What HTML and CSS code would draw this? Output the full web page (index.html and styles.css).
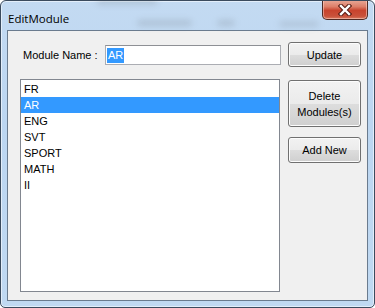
FILE: index.html
```html
<!DOCTYPE html>
<html lang="en">
<head>
    <meta charset="UTF-8">
    <title>EditModule</title>
    <link rel="stylesheet" href="styles.css">
</head>
<body>
    <div class="window">
        <div class="titlebar">
            <span class="blur blur-a"></span>
            <span class="blur blur-b"></span>
            <span class="blur blur-c"></span>
            <span class="blur blur-d"></span>
            <span class="title">EditModule</span>
            <button class="close" aria-label="Close">
                <svg width="14" height="12" viewBox="0 0 14 12">
                    <path d="M3 2 L11 10 M11 2 L3 10" stroke="#5a1d14" stroke-width="4.5" stroke-linecap="square"/>
                    <path d="M3 2 L11 10 M11 2 L3 10" stroke="#ffffff" stroke-width="2.4" stroke-linecap="square"/>
                </svg>
            </button>
        </div>

        <div class="client">
            <div class="left-col">
                <div class="name-row">
                    <label class="name-label">Module Name :</label>
                    <div class="textbox"><span class="sel">AR</span></div>
                </div>
                <ul class="listbox">
                    <li>FR</li>
                    <li class="selected">AR</li>
                    <li>ENG</li>
                    <li>SVT</li>
                    <li>SPORT</li>
                    <li>MATH</li>
                    <li>II</li>
                </ul>
            </div>
            <div class="right-col">
                <button class="btn btn-update">Update</button>
                <button class="btn btn-delete">Delete<br>Modules(s)</button>
                <button class="btn btn-add">Add New</button>
            </div>
        </div>
    </div>
</body>
</html>
```

FILE: styles.css
```css
body {
    margin: 0;
    background: #ffffff;
    font-family: "Liberation Sans", Arial, sans-serif;
    font-size: 11px;
}
.window {
    width: 375px;
    height: 308px;
    box-sizing: border-box;
    border: 1px solid #3b4b5e;
    border-radius: 6px 6px 5px 5px;
    padding: 0 6px 6px 6px;
    background: linear-gradient(to bottom, #c3daf2 0%, #bcd6f1 40%, #c0d9f2 100%);
    box-shadow: inset 0 0 0 1px #e3eefa;
    display: flex;
    flex-direction: column;
    overflow: hidden;
}
.titlebar {
    position: relative;
    height: 29px;
    display: flex;
    justify-content: space-between;
    align-items: flex-start;
}
.blur {
    position: absolute;
    background: #7f8a96;
    filter: blur(3px);
    opacity: 0.55;
    border-radius: 3px;
}
.blur-a { left: 90px; top: -2px; width: 60px; height: 5px; opacity: 0.35; }
.blur-b { left: 130px; top: 19px; width: 55px; height: 6px; opacity: 0.3; }
.blur-c { left: 210px; top: 19px; width: 18px; height: 6px; opacity: 0.3; }
.blur-d { left: 272px; top: 20px; width: 40px; height: 6px; opacity: 0.25; }
.title {
    position: relative;
    margin: 10px 0 0 1px;
    font-family: "Open Sans", "Noto Sans", sans-serif;
    font-size: 11.5px;
    color: #000000;
}
.close {
    position: relative;
    width: 46px;
    height: 20px;
    margin-top: -1px;
    padding: 0;
    border: 1px solid #4e2a24;
    border-top: none;
    border-radius: 0 0 5px 5px;
    background: linear-gradient(to bottom, #e9a998 0%, #dd7f69 35%, #c8432d 55%, #c9513a 85%, #d77a5f 100%);
    box-shadow: inset 0 0 0 1px rgba(255, 220, 210, 0.5);
    display: flex;
    align-items: center;
    justify-content: center;
}
.client {
    flex: 1;
    border: 1px solid #6a7b8e;
    background: #f0f0f0;
    display: flex;
    padding: 11px 0 0 12px;
}
.left-col {
    width: 261px;
    display: flex;
    flex-direction: column;
}
.name-row {
    height: 25px;
    display: flex;
    align-items: center;
}
.name-label {
    width: 82px;
    padding-left: 3px;
    color: #000000;
}
.textbox {
    width: 176px;
    height: 20px;
    box-sizing: border-box;
    border: 1px solid #abadb3;
    border-top-color: #8e9095;
    background: #ffffff;
    padding: 2px 0 0 1px;
}
.sel {
    display: inline-block;
    height: 15px;
    line-height: 15px;
    padding: 0 1px;
    background: #3399ff;
    color: #ffffff;
}
.listbox {
    list-style: none;
    margin: 12px 0 0 0;
    padding: 1px 0 0 0;
    width: 260px;
    height: 213px;
    box-sizing: border-box;
    border: 1px solid #828790;
    background: #ffffff;
}
.listbox li {
    height: 16px;
    line-height: 16px;
    padding-left: 3px;
    color: #000000;
}
.listbox li.selected {
    background: #3399ff;
    color: #ffffff;
}
.right-col {
    margin-left: 7px;
    width: 73px;
    display: flex;
    flex-direction: column;
}
.btn {
    font-family: "Liberation Sans", Arial, sans-serif;
    font-size: 11px;
    color: #000000;
    border: 1px solid #707070;
    border-radius: 3px;
    background: linear-gradient(to bottom, #f2f2f2 0%, #ebebeb 50%, #dddddd 51%, #cfcfcf 100%);
    box-shadow: inset 0 0 0 1px #fcfcfc;
    padding: 0;
    line-height: 16px;
}
.btn-update {
    height: 25px;
}
.btn-delete {
    height: 47px;
    margin-top: 13px;
}
.btn-add {
    height: 26px;
    margin-top: 10px;
}
```
